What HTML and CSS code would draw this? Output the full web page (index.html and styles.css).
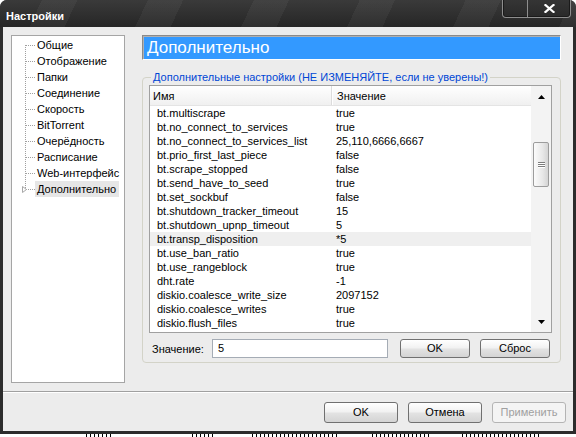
FILE: index.html
```html
<!DOCTYPE html>
<html lang="ru">
<head>
<meta charset="utf-8">
<title>Настройки</title>
<link rel="stylesheet" href="styles.css">
</head>
<body>
<div class="win">
  <div class="titlebar">
    <span class="title">Настройки</span>
    <div class="tbtns">
      <div class="tb tb-min"></div>
      <div class="tb tb-close">
        <svg width="11" height="9" viewBox="0 0 11 9"><path d="M1.5 1 L9.5 8 M9.5 1 L1.5 8" stroke="#fff" stroke-width="2.2" stroke-linecap="square"/></svg>
      </div>
    </div>
  </div>
  <div class="client">
    <div class="main">
      <div class="tree">
        <div class="ti first"><span class="ind"></span><span class="conn"></span><span class="lbl">Общие</span></div>
        <div class="ti"><span class="ind"></span><span class="conn"></span><span class="lbl">Отображение</span></div>
        <div class="ti"><span class="ind"></span><span class="conn"></span><span class="lbl">Папки</span></div>
        <div class="ti"><span class="ind"></span><span class="conn"></span><span class="lbl">Соединение</span></div>
        <div class="ti"><span class="ind"></span><span class="conn"></span><span class="lbl">Скорость</span></div>
        <div class="ti"><span class="ind"></span><span class="conn"></span><span class="lbl">BitTorrent</span></div>
        <div class="ti"><span class="ind"></span><span class="conn"></span><span class="lbl">Очерёдность</span></div>
        <div class="ti"><span class="ind"></span><span class="conn"></span><span class="lbl">Расписание</span></div>
        <div class="ti"><span class="ind"></span><span class="conn"></span><span class="lbl">Web-интерфейс</span></div>
        <div class="ti last"><span class="ind"><svg class="exp" width="7" height="9" viewBox="0 0 7 9"><path d="M1.5 1.5 L5.5 4.5 L1.5 7.5 Z" fill="#fff" stroke="#a8a8a8" stroke-width="1"/></svg></span><span class="conn"></span><span class="lbl sel">Дополнительно</span></div>
      </div>
      <div class="panel">
        <div class="banner">Дополнительно</div>
        <div class="group">
          <span class="legend">Дополнительные настройки (НЕ ИЗМЕНЯЙТЕ, если не уверены!)</span>
          <div class="list">
            <div class="list-body">
              <div class="lhead">
                <div class="hc hc1">Имя</div>
                <div class="hc hc2">Значение</div>
              </div>
              <div class="row"><span class="c1">bt.multiscrape</span><span class="c2">true</span></div>
              <div class="row"><span class="c1">bt.no_connect_to_services</span><span class="c2">true</span></div>
              <div class="row"><span class="c1">bt.no_connect_to_services_list</span><span class="c2">25,110,6666,6667</span></div>
              <div class="row"><span class="c1">bt.prio_first_last_piece</span><span class="c2">false</span></div>
              <div class="row"><span class="c1">bt.scrape_stopped</span><span class="c2">false</span></div>
              <div class="row"><span class="c1">bt.send_have_to_seed</span><span class="c2">true</span></div>
              <div class="row"><span class="c1">bt.set_sockbuf</span><span class="c2">false</span></div>
              <div class="row"><span class="c1">bt.shutdown_tracker_timeout</span><span class="c2">15</span></div>
              <div class="row"><span class="c1">bt.shutdown_upnp_timeout</span><span class="c2">5</span></div>
              <div class="row hl"><span class="c1">bt.transp_disposition</span><span class="c2">*5</span></div>
              <div class="row"><span class="c1">bt.use_ban_ratio</span><span class="c2">true</span></div>
              <div class="row"><span class="c1">bt.use_rangeblock</span><span class="c2">true</span></div>
              <div class="row"><span class="c1">dht.rate</span><span class="c2">-1</span></div>
              <div class="row"><span class="c1">diskio.coalesce_write_size</span><span class="c2">2097152</span></div>
              <div class="row"><span class="c1">diskio.coalesce_writes</span><span class="c2">true</span></div>
              <div class="row"><span class="c1">diskio.flush_files</span><span class="c2">true</span></div>
            </div>
            <div class="vscroll">
              <div class="sbtn"><svg width="7" height="4" viewBox="0 0 7 4"><path d="M3.5 0 L7 4 L0 4 Z" fill="#000"/></svg></div>
              <div class="track">
                <div class="thumb"><span class="grip"></span><span class="grip"></span><span class="grip"></span></div>
              </div>
              <div class="sbtn sbtn-down"><svg width="7" height="4" viewBox="0 0 7 4"><path d="M0 0 L7 0 L3.5 4 Z" fill="#000"/></svg></div>
            </div>
          </div>
          <div class="editrow">
            <span class="elabel">Значение:</span>
            <div class="einput">5</div>
            <button class="btn btn-sm btn-ok">OK</button>
            <button class="btn btn-sm">Сброс</button>
          </div>
        </div>
      </div>
    </div>
    <div class="sep"></div>
    <div class="footer">
      <button class="btn">OK</button>
      <button class="btn">Отмена</button>
      <button class="btn disabled">Применить</button>
    </div>
  </div>
</div>
<div class="strip"></div>
</body>
</html>
```

FILE: styles.css
```css
html, body {
  margin: 0;
  padding: 0;
}
body {
  width: 576px;
  height: 437px;
  overflow: hidden;
  background: #fff;
  font-family: "Liberation Sans", Arial, sans-serif;
  font-size: 11px;
  color: #000;
}
.win {
  height: 434px;
  display: flex;
  flex-direction: column;
  background: #2c2c2c;
  border-radius: 7px 7px 0 0;
}
.titlebar {
  height: 27px;
  flex: none;
  display: flex;
  align-items: flex-start;
  border-radius: 7px 7px 0 0;
  background:
    repeating-linear-gradient(115deg, rgba(255,255,255,0) 0px, rgba(255,255,255,0) 38px, rgba(255,255,255,0.045) 38px, rgba(255,255,255,0.045) 70px, rgba(255,255,255,0) 70px, rgba(255,255,255,0) 96px),
    linear-gradient(#3a3a3a, #262626);
}
.title {
  color: #fff;
  font-weight: bold;
  font-size: 11px;
  line-height: 13px;
  padding: 10px 0 0 6px;
}
.tbtns {
  margin-left: auto;
  margin-right: 5px;
  display: flex;
  width: 69px;
  height: 18px;
  box-sizing: border-box;
  border: 1px solid #8e8e8e;
  border-top: none;
  border-radius: 0 0 4px 4px;
  box-shadow: inset 0 -1px 0 #1a1a1a, inset 1px 0 0 #1a1a1a, inset -1px 0 0 #1a1a1a;
  background: linear-gradient(#353535, #2a2a2a);
}
.tb-min {
  width: 24px;
  border-right: 1px solid #8e8e8e;
}
.tb-close {
  flex: 1;
  display: flex;
  justify-content: center;
  padding-top: 4px;
  padding-left: 1px;
}
.client {
  flex: 1;
  margin: 0 3px 3px 3px;
  background: #ececec;
  display: flex;
  flex-direction: column;
}
.main {
  height: 364px;
  box-sizing: border-box;
  display: flex;
  gap: 17px;
  padding: 8px 12px 8px 8px;
}
.tree {
  width: 114px;
  height: 348px;
  box-sizing: border-box;
  border: 1px solid #a5a5a5;
  background: #fff;
  padding-top: 1px;
}
.ti {
  display: flex;
  height: 16px;
  line-height: 16px;
}
.ind {
  width: 13px;
  flex: none;
  display: flex;
  justify-content: flex-end;
  align-items: center;
}
.exp {
  margin-right: -3px;
  position: relative;
  z-index: 1;
}
.conn {
  width: 10px;
  flex: none;
  background-image:
    repeating-linear-gradient(to bottom, #a0a0a0 0px, #a0a0a0 1px, transparent 1px, transparent 2px),
    repeating-linear-gradient(to right, #a0a0a0 0px, #a0a0a0 1px, transparent 1px, transparent 2px);
  background-size: 1px 16px, 10px 1px;
  background-position: 0 0, 1px 8px;
  background-repeat: no-repeat;
}
.ti.first .conn {
  background-size: 1px 8px, 10px 1px;
  background-position: 0 8px, 1px 8px;
}
.ti.last .conn {
  background-size: 1px 9px, 10px 1px;
  background-position: 0 0, 1px 8px;
}
.lbl {
  padding: 0 3px 0 2px;
  white-space: nowrap;
}
.lbl.sel {
  background: #e6e6e6;
}
.panel {
  width: 419px;
  display: flex;
  flex-direction: column;
}
.banner {
  height: 25px;
  box-sizing: border-box;
  border: 1px solid;
  border-color: #8a8a8a #ffffff #ffffff #8a8a8a;
  box-shadow: inset 1px 1px 0 #b0b0b0;
  background: #3399ff;
  color: #fff;
  font-size: 17px;
  line-height: 23px;
  padding-left: 4px;
}
.group {
  margin-top: 17px;
  position: relative;
  border: 1px solid #d3d3c8;
  border-radius: 4px;
  padding: 7px 8px 4px 6px;
}
.legend {
  position: absolute;
  top: -7px;
  left: 8px;
  line-height: 13px;
  padding: 0 2px;
  background: #ececec;
  color: #0046d5;
  white-space: nowrap;
}
.list {
  height: 248px;
  box-sizing: border-box;
  border: 1px solid #a0a0a0;
  background: #fff;
  display: flex;
  overflow: hidden;
}
.list-body {
  width: 381px;
  flex: none;
}
.lhead {
  height: 20px;
  display: flex;
  background: linear-gradient(#ffffff 0%, #fafafa 30%, #f0f0f0 100%);
  border-bottom: 1px solid #e4e4e4;
  box-sizing: border-box;
}
.hc {
  padding-top: 2px;
  line-height: 17px;
  box-sizing: border-box;
}
.hc1 {
  width: 182px;
  padding-left: 3px;
  border-right: 1px solid #dcdcdc;
  box-shadow: 1px 0 0 #ffffff;
}
.hc2 {
  flex: 1;
  padding-left: 5px;
}
.row {
  display: flex;
  height: 14px;
  line-height: 14px;
  white-space: nowrap;
}
.row.hl {
  background: #efefef;
}
.c1 {
  width: 186px;
  box-sizing: border-box;
  padding-left: 7px;
  flex: none;
}
.c2 {
  flex: 1;
}
.vscroll {
  flex: 1;
  display: flex;
  flex-direction: column;
  background: #f3f3f3;
}
.sbtn {
  height: 20px;
  display: flex;
  justify-content: center;
  align-items: center;
  padding-top: 1px;
  box-sizing: border-box;
}
.sbtn-down {
  padding-top: 0;
  align-items: flex-end;
  padding-bottom: 8px;
}
.track {
  flex: 1;
  padding: 36px 2px 0 2px;
}
.thumb {
  height: 45px;
  box-sizing: border-box;
  border: 1px solid #9c9c9c;
  border-radius: 2px;
  background: linear-gradient(to right, #fbfbfb, #e8e8e8 60%, #d4d4d4);
  display: flex;
  flex-direction: column;
  align-items: center;
  justify-content: center;
  gap: 1px;
}
.grip {
  width: 7px;
  height: 1px;
  background: #7d7d7d;
  box-shadow: 0 1px 0 #ffffff;
}
.editrow {
  margin-top: 6px;
  height: 19px;
  display: flex;
  align-items: center;
}
.elabel {
  width: 63px;
  box-sizing: border-box;
  padding-left: 3px;
  flex: none;
}
.einput {
  width: 176px;
  height: 19px;
  box-sizing: border-box;
  border: 1px solid #a5acb5;
  background: #fff;
  padding-left: 5px;
  line-height: 17px;
  flex: none;
}
.btn {
  box-sizing: border-box;
  height: 21px;
  width: 74px;
  margin: 0;
  padding: 0;
  border: 1px solid #707070;
  border-radius: 3px;
  background: linear-gradient(#ffffff 0%, #f2f2f2 45%, #e2e2e2 55%, #d4d4d4 100%);
  font-family: "Liberation Sans", Arial, sans-serif;
  font-size: 11px;
  color: #000;
  line-height: 19px;
  text-align: center;
}
.btn-sm {
  width: 70px;
  height: 19px;
  line-height: 17px;
  margin-left: 10px;
}
.btn-ok {
  margin-left: 12px;
}
.btn.disabled {
  border-color: #b4b4b4;
  background: #f4f4f4;
  color: #a0a0a0;
}
.sep {
  height: 1px;
  background: #a0a0a0;
  border-bottom: 1px solid #ffffff;
}
.footer {
  flex: 1;
  display: flex;
  justify-content: flex-end;
  gap: 10px;
  padding: 9px 7px 0 0;
}
.strip {
  height: 3px;
  background:
    repeating-linear-gradient(to right, #ffffff 0px, #ffffff 2px, #000 2px, #000 3px, #ffffff 3px, #ffffff 4px) 84px 0 / 28px 3px no-repeat,
    repeating-linear-gradient(to right, #ffffff 0px, #ffffff 2px, #000 2px, #000 3px, #ffffff 3px, #ffffff 4px) 190px 0 / 24px 3px no-repeat,
    repeating-linear-gradient(to right, #ffffff 0px, #ffffff 2px, #000 2px, #000 3px, #ffffff 3px, #ffffff 4px) 250px 0 / 90px 3px no-repeat,
    repeating-linear-gradient(to right, #ffffff 0px, #ffffff 2px, #000 2px, #000 3px, #ffffff 3px, #ffffff 4px) 370px 0 / 60px 3px no-repeat,
    repeating-linear-gradient(to right, #ffffff 0px, #ffffff 2px, #000 2px, #000 3px, #ffffff 3px, #ffffff 4px) 460px 0 / 80px 3px no-repeat,
    #ffffff;
}
```
